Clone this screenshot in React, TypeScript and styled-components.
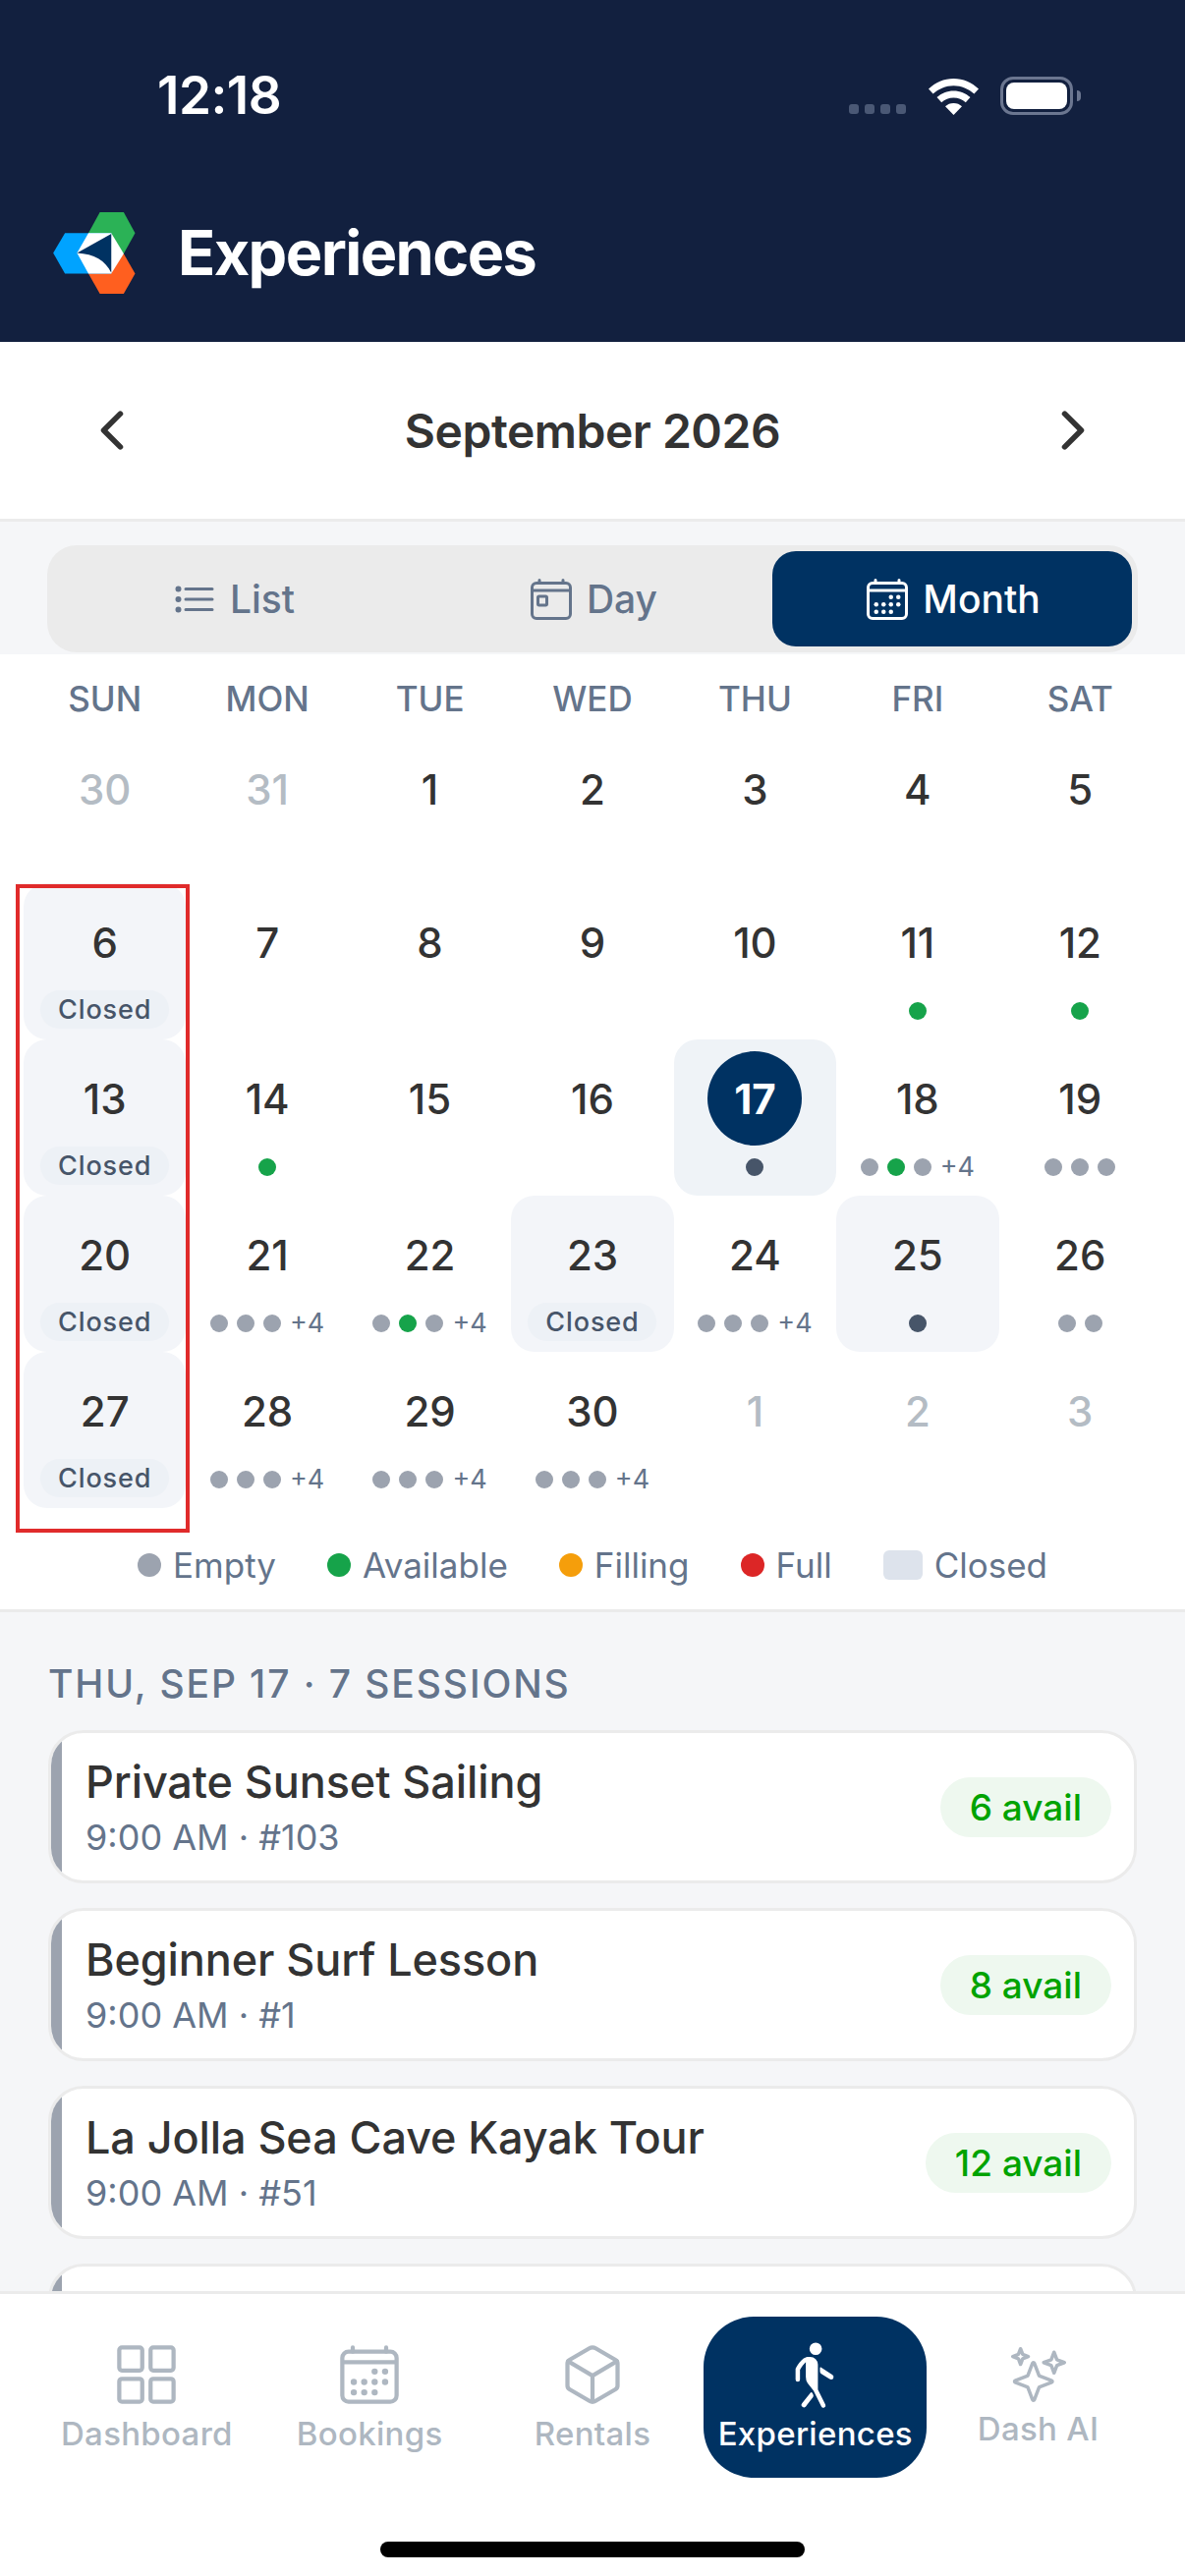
import React from 'react';
import styled, { createGlobalStyle } from 'styled-components';
import {
  IoCalendarOutline,
  IoChevronBack,
  IoChevronForward,
  IoCubeOutline,
  IoGridOutline,
  IoListOutline,
  IoSparklesOutline,
  IoTodayOutline,
  IoWalk,
} from 'react-icons/io5';

type DotKind = 'empty' | 'avail' | 'slate';

interface Day {
  n: number;
  muted?: boolean;
  shaded?: boolean;
  pill?: boolean;
  selected?: boolean;
  dots?: DotKind[];
  more?: boolean;
}

const WEEKDAYS = ['SUN', 'MON', 'TUE', 'WED', 'THU', 'FRI', 'SAT'];

const threeEmpty: DotKind[] = ['empty', 'empty', 'empty'];
const mixed: DotKind[] = ['empty', 'avail', 'empty'];

const DAYS: Day[] = [
  { n: 30, muted: true },
  { n: 31, muted: true },
  { n: 1 },
  { n: 2 },
  { n: 3 },
  { n: 4 },
  { n: 5 },
  { n: 6, shaded: true, pill: true },
  { n: 7 },
  { n: 8 },
  { n: 9 },
  { n: 10 },
  { n: 11, dots: ['avail'] },
  { n: 12, dots: ['avail'] },
  { n: 13, shaded: true, pill: true },
  { n: 14, dots: ['avail'] },
  { n: 15 },
  { n: 16 },
  { n: 17, selected: true, dots: ['slate'] },
  { n: 18, dots: mixed, more: true },
  { n: 19, dots: threeEmpty },
  { n: 20, shaded: true, pill: true },
  { n: 21, dots: threeEmpty, more: true },
  { n: 22, dots: mixed, more: true },
  { n: 23, shaded: true, pill: true },
  { n: 24, dots: threeEmpty, more: true },
  { n: 25, shaded: true, dots: ['slate'] },
  { n: 26, dots: ['empty', 'empty'] },
  { n: 27, shaded: true, pill: true },
  { n: 28, dots: threeEmpty, more: true },
  { n: 29, dots: threeEmpty, more: true },
  { n: 30, dots: threeEmpty, more: true },
  { n: 1, muted: true },
  { n: 2, muted: true },
  { n: 3, muted: true },
];

const SESSIONS = [
  { name: 'Private Sunset Sailing', meta: '9:00 AM · #103', avail: '6 avail' },
  { name: 'Beginner Surf Lesson', meta: '9:00 AM · #1', avail: '8 avail' },
  { name: 'La Jolla Sea Cave Kayak Tour', meta: '9:00 AM · #51', avail: '12 avail' },
];

const dotColors: Record<DotKind, string> = {
  empty: '#9ca3af',
  avail: '#16a34a',
  slate: '#475569',
};

const GlobalStyle = createGlobalStyle`
  html, body {
    margin: 0;
    padding: 0;
    background: #fff;
  }
  * {
    box-sizing: border-box;
  }
`;

const Screen = styled.div`
  position: relative;
  width: 1206px;
  height: 2622px;
  display: flex;
  flex-direction: column;
  overflow: hidden;
  font-family: Inter, "Liberation Sans", sans-serif;
  color: #333;
`;

const Header = styled.header`
  flex: none;
  height: 348px;
  background: #12203f;
  color: #fff;
`;

const StatusBar = styled.div`
  height: 194px;
  padding: 0 114px 0 160px;
  display: flex;
  align-items: center;
  justify-content: space-between;
`;

const Clock = styled.div`
  font-size: 53px;
  font-weight: 600;
  letter-spacing: -0.5px;
`;

const StatusIcons = styled.div`
  display: flex;
  align-items: flex-end;
`;

const Signal = styled.div`
  display: flex;
  gap: 6px;
  margin: 0 23px 1px 0;
`;

const SignalDot = styled.span`
  width: 10px;
  height: 10px;
  border-radius: 3px;
  background: #4a5875;
`;

const Battery = styled.div`
  position: relative;
  width: 74px;
  height: 39px;
  margin-left: 22px;
  padding: 3px;
  border: 3px solid #6b7690;
  border-radius: 13px;

  &::before {
    content: '';
    display: block;
    height: 100%;
    border-radius: 8px;
    background: #fff;
  }

  &::after {
    content: '';
    position: absolute;
    top: 11px;
    right: -11px;
    width: 4px;
    height: 11px;
    border-radius: 0 4px 4px 0;
    background: #6b7690;
  }
`;

const Brand = styled.div`
  display: flex;
  align-items: center;
  gap: 43px;
  padding: 21px 0 0 54px;
`;

const BrandName = styled.div`
  font-size: 63px;
  font-weight: 700;
  letter-spacing: -1.6px;
  line-height: 84px;
`;

const MonthBar = styled.div`
  flex: none;
  height: 183px;
  padding: 0 84px;
  display: flex;
  align-items: center;
  justify-content: space-between;
  background: #fff;
  border-bottom: 3px solid #ebebeb;
`;

const MonthTitle = styled.div`
  font-size: 48px;
  font-weight: 600;
  letter-spacing: -0.5px;
`;

const SegmentWrap = styled.div`
  flex: none;
  padding: 24px 48px 2px;
  background: #f5f6f8;
`;

const Segments = styled.div`
  display: grid;
  grid-template-columns: repeat(3, 1fr);
  height: 109px;
  padding: 6px;
  border-radius: 30px;
  background: #ebebeb;
`;

const Segment = styled.div<{ $active?: boolean }>`
  display: flex;
  align-items: center;
  justify-content: center;
  gap: 12px;
  border-radius: 24px;
  font-size: 39px;
  font-weight: 500;
  color: ${(p) => (p.$active ? '#fff' : '#64748b')};
  background: ${(p) => (p.$active ? '#003262' : 'transparent')};
`;

const Calendar = styled.section`
  position: relative;
  flex: none;
  background: #fff;
  border-bottom: 3px solid #ebebeb;
`;

const Weekdays = styled.div`
  display: grid;
  grid-template-columns: repeat(7, 1fr);
  height: 77px;
  padding: 13px 24px 0;
`;

const Weekday = styled.div`
  display: flex;
  align-items: center;
  justify-content: center;
  font-size: 35px;
  font-weight: 500;
  color: #64748b;
`;

const DayGrid = styled.div`
  display: grid;
  grid-template-columns: repeat(7, 1fr);
  grid-template-rows: 156px repeat(4, 159px);
  padding: 0 24px;
`;

const DayCell = styled.div<{ $tone?: 'closed' | 'selected' }>`
  display: flex;
  flex-direction: column;
  align-items: center;
  padding-top: 12px;
  border-radius: 24px;
  background: ${(p) =>
    p.$tone === 'closed' ? '#f3f5f9' : p.$tone === 'selected' ? '#eff3f7' : 'transparent'};
`;

const DayNumber = styled.div<{ $muted?: boolean; $selected?: boolean }>`
  width: 96px;
  height: 96px;
  display: flex;
  align-items: center;
  justify-content: center;
  border-radius: 50%;
  font-size: 42px;
  font-weight: ${(p) => (p.$selected ? 700 : 500)};
  color: ${(p) => (p.$selected ? '#fff' : p.$muted ? '#b4bcc4' : '#333')};
  background: ${(p) => (p.$selected ? '#003262' : 'transparent')};
`;

const Marks = styled.div`
  height: 42px;
  margin-top: 1px;
  display: flex;
  align-items: center;
  justify-content: center;
  gap: 9px;
`;

const Dot = styled.span<{ $kind: DotKind }>`
  width: 18px;
  height: 18px;
  border-radius: 50%;
  background: ${(p) => dotColors[p.$kind]};
`;

const More = styled.span`
  font-size: 27px;
  line-height: 18px;
  color: #64748b;
`;

const ClosedPill = styled.span`
  width: 131px;
  height: 39px;
  margin-top: -3px;
  display: flex;
  align-items: center;
  justify-content: center;
  border-radius: 20px;
  background: #edf1f6;
  font-size: 27px;
  font-weight: 500;
  letter-spacing: 0.9px;
  color: #475569;
`;

const Legend = styled.div`
  height: 103px;
  padding-top: 12px;
  display: flex;
  align-items: center;
  justify-content: center;
  gap: 52px;
`;

const LegendItem = styled.div`
  display: flex;
  align-items: center;
  gap: 12px;
  font-size: 35px;
  color: #64748b;
`;

const LegendDot = styled.span<{ $color: string }>`
  width: 24px;
  height: 24px;
  border-radius: 50%;
  background: ${(p) => p.$color};
`;

const LegendSwatch = styled.span`
  width: 40px;
  height: 30px;
  border-radius: 6px;
  background: #dde3ec;
`;

const RedMark = styled.div`
  position: absolute;
  top: 234px;
  left: 16px;
  width: 177px;
  height: 660px;
  border: 4px solid #e02b2b;
  pointer-events: none;
`;

const Sessions = styled.section`
  flex: 1;
  min-height: 0;
  overflow: hidden;
  padding: 51px 48px 0;
  background: #f5f6f8;
`;

const SessionsTitle = styled.div`
  margin-bottom: 25px;
  padding-left: 1px;
  font-size: 39px;
  line-height: 44px;
  font-weight: 500;
  letter-spacing: 1.9px;
  color: #64748b;
`;

const SessionList = styled.div`
  display: flex;
  flex-direction: column;
  gap: 25px;
  padding: 0 1px;
`;

const SessionCard = styled.div`
  flex: none;
  height: 156px;
  display: flex;
  overflow: hidden;
  border: 3px solid #ebebeb;
  border-radius: 36px;
  background: #fff;
`;

const CardStripe = styled.div`
  flex: none;
  width: 11px;
  background: #9ca3af;
`;

const CardBody = styled.div`
  flex: 1;
  min-width: 0;
  display: flex;
  align-items: center;
  justify-content: space-between;
  padding: 0 23px 0 24px;
`;

const SessionName = styled.div`
  font-size: 45px;
  font-weight: 500;
  line-height: 56px;
  letter-spacing: -0.1px;
  color: #333;
`;

const SessionMeta = styled.div`
  margin-top: 6px;
  font-size: 36px;
  line-height: 44px;
  color: #64748b;
`;

const AvailBadge = styled.div`
  height: 61px;
  padding: 0 30px;
  display: flex;
  align-items: center;
  border-radius: 31px;
  background: #eef8ef;
  font-size: 37px;
  font-weight: 500;
  color: #00a300;
`;

const TabBar = styled.nav`
  flex: none;
  height: 290px;
  padding: 23px 36px 0;
  display: grid;
  grid-template-columns: repeat(5, 1fr);
  grid-template-rows: 164px;
  background: #fff;
  border-top: 3px solid #ebebeb;
`;

const TabItem = styled.div<{ $active?: boolean; $small?: boolean }>`
  display: flex;
  flex-direction: column;
  align-items: center;
  justify-content: center;
  gap: ${(p) => (p.$small ? 7 : 6)}px;
  border-radius: 51px;
  font-size: 33px;
  line-height: 40px;
  font-weight: 500;
  letter-spacing: 0.3px;
  color: ${(p) => (p.$active ? '#fff' : '#aeb7c1')};
  background: ${(p) => (p.$active ? '#003262' : 'transparent')};
`;

const WalkIcon = styled(IoWalk)`
  margin: -2px 0;
`;

const HomeBar = styled.div`
  position: absolute;
  left: 387px;
  bottom: 19px;
  width: 432px;
  height: 16px;
  border-radius: 8px;
  background: #000;
`;

const Logo = () => (
  <svg width="84" height="83" viewBox="72 78 252 250">
    <path d="M215 78h73l35 64-35 63H215l-35-63z" fill="#2bb256" />
    <path d="M215 328h73l35-62-35-61H215l-35 61z" fill="#ff5f1f" />
    <path d="M72 203l36-61h142v124H108z" fill="#00a3ff" />
    <path d="M145 203l35-61h70l38 63-38 61h-70z" fill="#fff" />
    <path d="M145 203L250 144v120c-18-38-52-58-105-61z" fill="#003262" />
  </svg>
);

const Wifi = () => (
  <svg width="51" height="37" viewBox="0 0 51 37">
    <path d="M25.5 0C15.8 0 7 3.8 0 10.6l4.6 5C10.4 10.3 17.6 7.2 25.5 7.2s15.1 3.1 20.9 8.4l4.6-5C44 3.8 35.2 0 25.5 0z" fill="#fff" />
    <path d="M25.5 12.5c-6.5 0-12.5 2.5-17 6.6l4.7 5.1c3.3-3 7.6-4.8 12.3-4.8s9 1.8 12.3 4.8l4.7-5.1c-4.500-4.100-10.500-6.600-17-6.600z" fill="#fff" />
    <path d="M25.5 25c-3.300 0-6.300 1.200-8.500 3.300l8.500 8.700 8.500-8.700c-2.200-2.100-5.200-3.300-8.500-3.300z" fill="#fff" />
  </svg>
);

const App = () => (
  <Screen>
    <GlobalStyle />
    <Header>
      <StatusBar>
        <Clock>12:18</Clock>
        <StatusIcons>
          <Signal>
            <SignalDot />
            <SignalDot />
            <SignalDot />
            <SignalDot />
          </Signal>
          <Wifi />
          <Battery />
        </StatusIcons>
      </StatusBar>
      <Brand>
        <Logo />
        <BrandName>Experiences</BrandName>
      </Brand>
    </Header>

    <MonthBar>
      <IoChevronBack size={60} color="#333" />
      <MonthTitle>September 2026</MonthTitle>
      <IoChevronForward size={60} color="#333" />
    </MonthBar>

    <SegmentWrap>
      <Segments>
        <Segment>
          <IoListOutline size={48} />
          List
        </Segment>
        <Segment>
          <IoTodayOutline size={48} />
          Day
        </Segment>
        <Segment $active>
          <IoCalendarOutline size={48} />
          Month
        </Segment>
      </Segments>
    </SegmentWrap>

    <Calendar>
      <Weekdays>
        {WEEKDAYS.map((d) => (
          <Weekday key={d}>{d}</Weekday>
        ))}
      </Weekdays>
      <DayGrid>
        {DAYS.map((d, i) => (
          <DayCell key={i} $tone={d.selected ? 'selected' : d.shaded ? 'closed' : undefined}>
            <DayNumber $muted={d.muted} $selected={d.selected}>
              {d.n}
            </DayNumber>
            <Marks>
              {d.pill && <ClosedPill>Closed</ClosedPill>}
              {d.dots?.map((k, j) => (
                <Dot key={j} $kind={k} />
              ))}
              {d.more && <More>+4</More>}
            </Marks>
          </DayCell>
        ))}
      </DayGrid>
      <Legend>
        <LegendItem>
          <LegendDot $color="#9ca3af" />
          Empty
        </LegendItem>
        <LegendItem>
          <LegendDot $color="#16a34a" />
          Available
        </LegendItem>
        <LegendItem>
          <LegendDot $color="#f59e0b" />
          Filling
        </LegendItem>
        <LegendItem>
          <LegendDot $color="#dc2626" />
          Full
        </LegendItem>
        <LegendItem>
          <LegendSwatch />
          Closed
        </LegendItem>
      </Legend>
      <RedMark />
    </Calendar>

    <Sessions>
      <SessionsTitle>THU, SEP 17 · 7 SESSIONS</SessionsTitle>
      <SessionList>
        {SESSIONS.map((s) => (
          <SessionCard key={s.name}>
            <CardStripe />
            <CardBody>
              <div>
                <SessionName>{s.name}</SessionName>
                <SessionMeta>{s.meta}</SessionMeta>
              </div>
              <AvailBadge>{s.avail}</AvailBadge>
            </CardBody>
          </SessionCard>
        ))}
        <SessionCard>
          <CardStripe />
        </SessionCard>
      </SessionList>
    </Sessions>

    <TabBar>
      <TabItem>
        <IoGridOutline size={68} />
        Dashboard
      </TabItem>
      <TabItem>
        <IoCalendarOutline size={68} />
        Bookings
      </TabItem>
      <TabItem>
        <IoCubeOutline size={68} />
        Rentals
      </TabItem>
      <TabItem $active>
        <WalkIcon size={72} />
        Experiences
      </TabItem>
      <TabItem $small>
        <IoSparklesOutline size={56} />
        Dash AI
      </TabItem>
    </TabBar>
    <HomeBar />
  </Screen>
);

export default App;
